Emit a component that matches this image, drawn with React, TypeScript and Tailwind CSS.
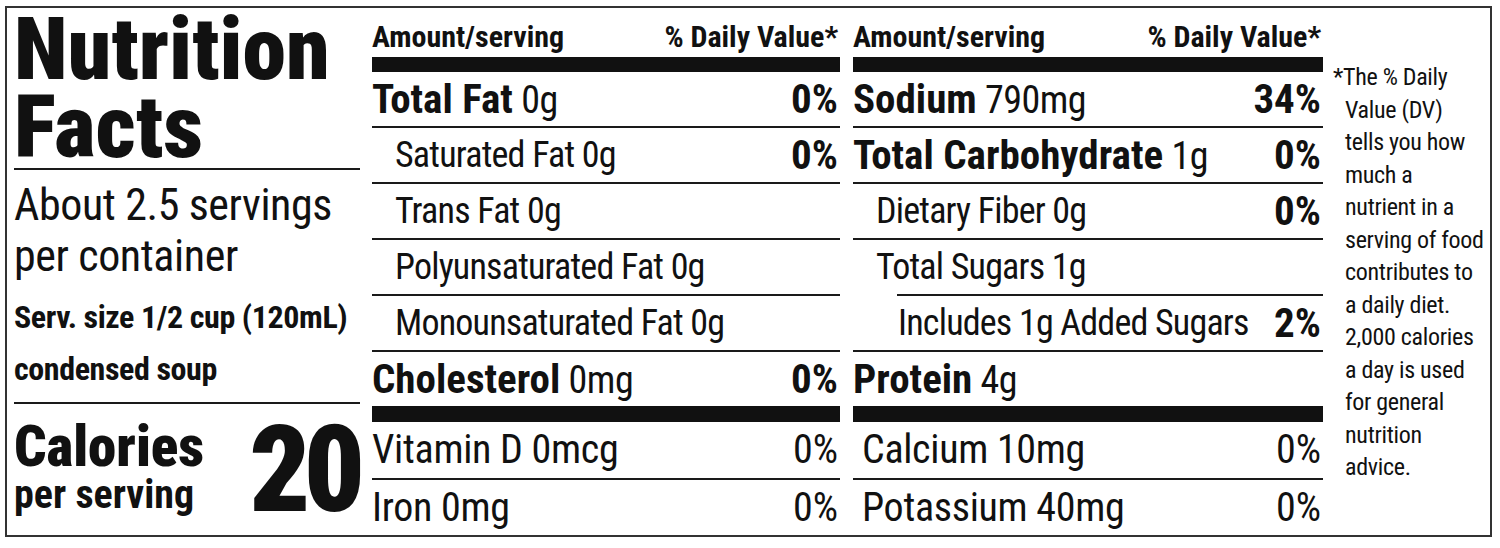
import React from 'react';

const font = "font-['Roboto','Liberation_Sans',sans-serif] [font-stretch:75%]";

interface RowProps {
    label: string;
    amount?: string;
    dv?: string;
    bold?: boolean;
    indent?: 0 | 1 | 2;
    border?: boolean;
    className?: string;
}

// one nutrient line: bold name + regular amount, or an indented sub-line
const Row: React.FC<RowProps> = ({ label, amount, dv, bold, indent = 0, border = true, className = 'h-[56px]' }) => {
    const pad = indent === 2 ? 'pl-[45px]' : indent === 1 ? 'pl-[23px]' : 'pl-0';
    return (
        <div className={`flex items-center justify-between ${className} ${pad} ${border ? 'border-b-2 border-[#1a1a1a]' : ''}`}>
            <span className="whitespace-nowrap leading-none">
                {bold ? (
                    <>
                        <span className="text-[41px] font-bold">{label}</span>
                        <span className="text-[38px] tracking-[-0.5px]"> {amount}</span>
                    </>
                ) : (
                    <span className="text-[36px] tracking-[-0.8px]">{label}</span>
                )}
            </span>
            {dv && <span className="pr-[2px] text-[41px] font-bold leading-none">{dv}</span>}
        </div>
    );
};

const VitaminRow: React.FC<{ label: string; dv: string; border?: boolean; className?: string }> = ({ label, dv, border = true, className = 'h-[58px]' }) => (
    <div className={`flex items-center justify-between ${className} ${border ? 'border-b-2 border-[#1a1a1a]' : ''}`}>
        <span className="text-[40px] leading-none tracking-[-0.3px] whitespace-nowrap">{label}</span>
        <span className="pr-[2px] text-[40px] leading-none">{dv}</span>
    </div>
);

const Header: React.FC = () => (
    <>
        <div className="flex h-[49px] items-end justify-between pb-[5px] text-[30px] font-bold leading-none">
            <span>Amount/serving</span>
            <span className="pr-[2px]">% Daily Value*</span>
        </div>
        <div className="h-[15px] bg-[#111]" />
    </>
);

const footnote = [
    '*The % Daily',
    'Value (DV)',
    'tells you how',
    'much a',
    'nutrient in a',
    'serving of food',
    'contributes to',
    'a daily diet.',
    '2,000 calories',
    'a day is used',
    'for general',
    'nutrition',
    'advice.',
];

export default function App() {
    return (
        <div className={`min-h-screen bg-white text-[#111] ${font}`}>
            <div className="pl-[5px] pt-[6px]">
                <div className="flex h-[531px] w-[1487px] border-2 border-[#333]">
                    {/* Left: title, servings, calories */}
                    <div className="ml-[7px] flex w-[346px] flex-col">
                        <div className="h-[162px] border-b-2 border-[#1a1a1a] pt-[2px]">
                            <h1 className="text-[88px] font-black leading-[78px]">
                                Nutrition
                                <br />
                                Facts
                            </h1>
                        </div>
                        <div className="h-[234px] border-b-2 border-[#1a1a1a] pt-[10px] whitespace-nowrap">
                            <p className="text-[44px] leading-[51px] tracking-[-0.4px]">
                                About 2.5 servings
                                <br />
                                per container
                            </p>
                            <p className="mt-[9px] text-[32px] font-bold leading-[52px] tracking-[-0.4px]">
                                Serv. size 1/2 cup (120mL)
                                <br />
                                condensed soup
                            </p>
                        </div>
                        <div className="flex flex-1 items-center justify-between">
                            <div className="pb-[6px]">
                                <div className="text-[57px] font-black leading-[56px]">Calories</div>
                                <div className="text-[40px] font-bold leading-[40px]">per serving</div>
                            </div>
                            <div className="pr-[2px] text-[120px] font-black leading-none tracking-[-7px]">20</div>
                        </div>
                    </div>

                    {/* Middle: fats */}
                    <div className="ml-[12px] flex w-[468px] flex-col">
                        <Header />
                        <Row label="Total Fat" amount="0g" dv="0%" bold />
                        <Row label="Saturated Fat 0g" dv="0%" indent={1} />
                        <Row label="Trans Fat 0g" indent={1} />
                        <Row label="Polyunsaturated Fat 0g" indent={1} />
                        <Row label="Monounsaturated Fat 0g" indent={1} />
                        <Row label="Cholesterol" amount="0mg" dv="0%" bold border={false} className="h-[54px]" />
                        <div className="h-[16px] bg-[#111]" />
                        <VitaminRow label="Vitamin D 0mcg" dv="0%" />
                        <VitaminRow label="Iron 0mg" dv="0%" border={false} className="flex-1" />
                    </div>

                    {/* Right: sodium, carbs, protein */}
                    <div className="ml-[13px] flex w-[470px] flex-col">
                        <Header />
                        <Row label="Sodium" amount="790mg" dv="34%" bold />
                        <Row label="Total Carbohydrate" amount="1g" dv="0%" bold />
                        <Row label="Dietary Fiber 0g" dv="0%" indent={1} />
                        {/* rule under Total Sugars starts at the Added Sugars indent */}
                        <div className="flex h-[56px]">
                            <div className="w-[44px]" />
                            <div className="flex flex-1 items-center border-b-2 border-[#1a1a1a]">
                                <span className="-ml-[21px] text-[36px] leading-none tracking-[-0.8px] whitespace-nowrap">Total Sugars 1g</span>
                            </div>
                        </div>
                        <Row label="Includes 1g Added Sugars" dv="2%" indent={2} />
                        <Row label="Protein" amount="4g" bold border={false} className="h-[54px]" />
                        <div className="h-[16px] bg-[#111]" />
                        <VitaminRow label="Calcium 10mg" dv="0%" className="h-[58px] pl-[9px]" />
                        <VitaminRow label="Potassium 40mg" dv="0%" border={false} className="flex-1 pl-[9px]" />
                    </div>

                    {/* Footnote */}
                    <div className="ml-[10px] w-[152px] pt-[53px]">
                        <p className="pl-[12px] -indent-[12px] text-[24px] leading-[32.5px] tracking-[-0.3px] whitespace-nowrap">
                            {footnote.map((line, i) => (
                                <React.Fragment key={i}>
                                    {line}
                                    {i < footnote.length - 1 && <br />}
                                </React.Fragment>
                            ))}
                        </p>
                    </div>
                </div>
            </div>
        </div>
    );
}
